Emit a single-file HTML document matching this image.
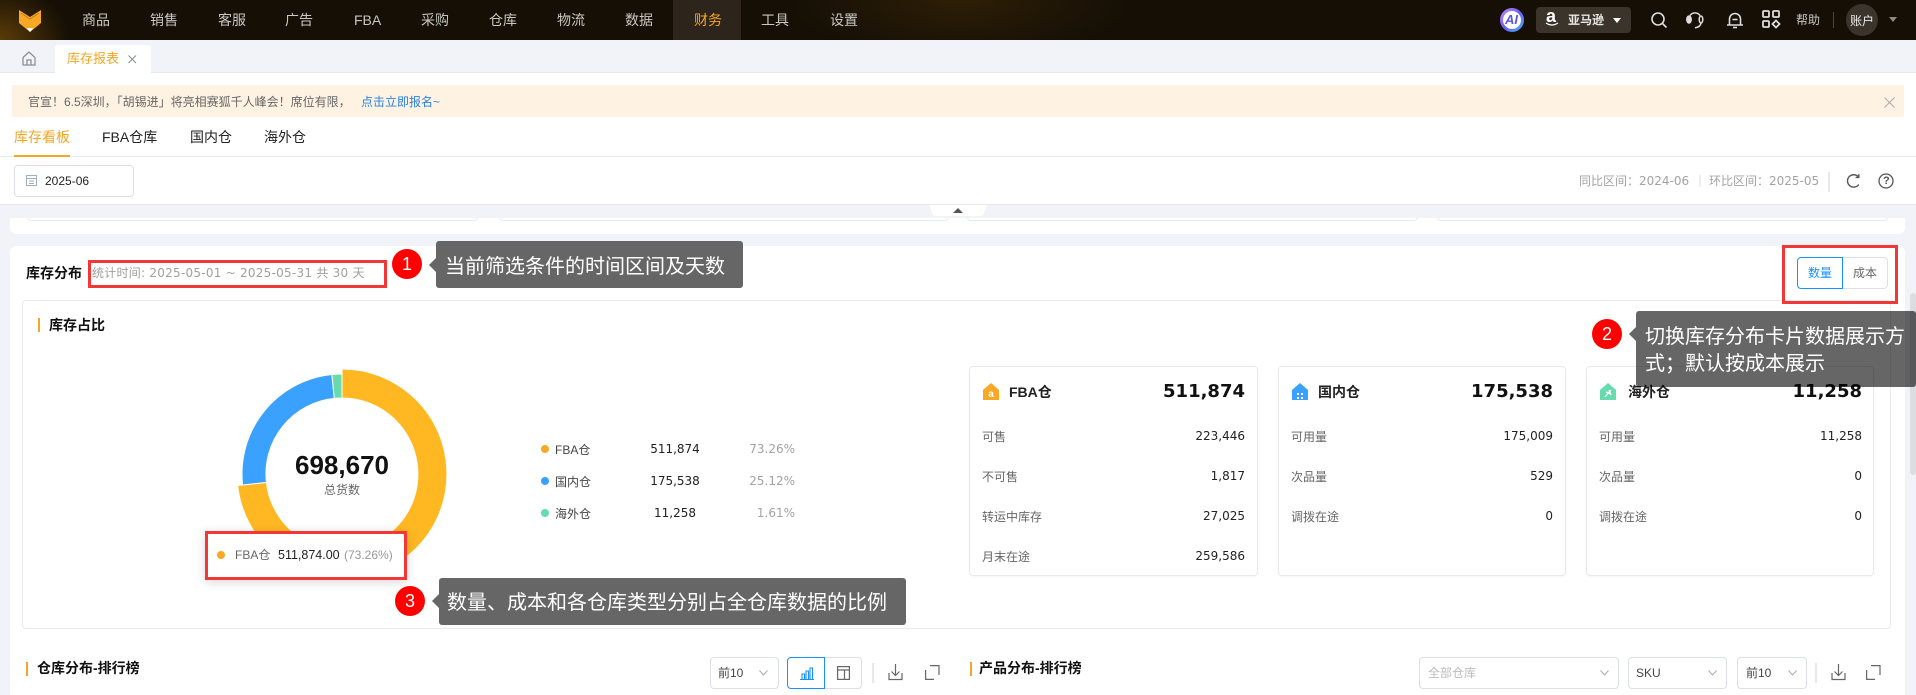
<!DOCTYPE html>
<html lang="zh"><head><meta charset="utf-8"><title>库存报表</title>
<style>
*{box-sizing:border-box;margin:0;padding:0}
html,body{width:1916px;height:695px;overflow:hidden;background:#f1f3f8}
body{position:relative;font-family:"Liberation Sans","Noto Sans CJK SC",sans-serif;font-size:12px;color:#222}
.a,.t{position:absolute}
.t{white-space:nowrap;line-height:18px}
.dj{font-family:"DejaVu Sans","Noto Sans CJK SC",sans-serif}
.hdr{left:0;top:0;width:1916px;height:40px;background:radial-gradient(ellipse 70px 55px at 0 40px,#5c3c08,transparent),radial-gradient(ellipse 170px 60px at 960px 0,#2e1f07,transparent),linear-gradient(#150f05,#150f05)}
.nav{color:#c9c7c3;font-size:14px;top:11px}
.lab{color:#666;font-size:12px}
.val{color:#222;font-size:12px;text-align:right;font-family:"DejaVu Sans",sans-serif}
.bt{font-weight:700;font-size:14px;color:#111}
.bar{background:#f5a623;width:2px;height:14px}
.box{border:1px solid #dcdfe6;border-radius:4px;background:#fff}
.red{border:3px solid #f33636;background:transparent}
.badge{width:30px;height:30px;border-radius:50%;background:#f00;color:#fff;font-size:18px;line-height:30px;text-align:center}
.tip{background:rgba(0,0,0,.6);border-radius:3px;color:#fff;font-size:20px}
.arr{width:0;height:0;border:7px solid transparent;border-right-color:#666;border-left:0}
.card{border:1px solid #e9eaee;border-radius:4px;background:#fff;box-shadow:0 1px 2px rgba(0,0,0,.04)}
.big{font-weight:700;font-size:18px;color:#111;text-align:right;line-height:26px;font-family:"DejaVu Sans",sans-serif}
.ct{font-weight:700;font-size:14px;color:#222}
.lv{font-size:12px;color:#222;text-align:center;font-family:"DejaVu Sans",sans-serif}
.lp{font-size:12px;color:#a3a3a3;text-align:right;font-family:"DejaVu Sans",sans-serif}
svg{position:absolute;overflow:visible}
</style></head><body>

<!-- header -->
<div class="a hdr"></div>
<svg style="left:0;top:0" width="60" height="40"><polygon points="19,10 30,17 41,10 41,23 30,32 19,23" fill="#f9a825"/><polygon points="26.500,28 33.500,28 30,32" fill="#fff"/><polyline points="21,13 30,19 39,13" fill="none" stroke="#c77f14" stroke-width="1"/></svg>
<div class="a" style="left:673px;top:0;width:68px;height:40px;background:#2d251c"></div>
<span class="t nav" style="left:82px">商品</span><span class="t nav" style="left:150px">销售</span><span class="t nav" style="left:218px">客服</span><span class="t nav" style="left:285px">广告</span><span class="t nav" style="left:354px">FBA</span><span class="t nav" style="left:421px">采购</span><span class="t nav" style="left:489px">仓库</span><span class="t nav" style="left:557px">物流</span><span class="t nav" style="left:625px">数据</span><span class="t nav" style="left:694px;color:#f5a623">财务</span><span class="t nav" style="left:761px">工具</span><span class="t nav" style="left:830px">设置</span>

<div class="a" style="left:1500px;top:8px;width:24px;height:24px;border-radius:50%;background:linear-gradient(135deg,#c58bf5,#6a5cf6 50%,#46b6f3);"></div>
<div class="a" style="left:1503px;top:11px;width:18px;height:18px;border-radius:50%;background:#fff"></div>
<span class="t" style="left:1505px;top:11px;font-size:13px;font-weight:700;font-style:italic;color:#5a55ea">AI</span>
<div class="a" style="left:1536px;top:7px;width:95px;height:26px;border-radius:4px;background:#3a342b"></div>
<span class="t" style="left:1546px;top:7px;font-size:18px;font-weight:700;color:#fff">a</span>
<svg style="left:1545px;top:22px" width="14" height="5"><path d="M1 1Q7 5 13 1" fill="none" stroke="#fff" stroke-width="1.200"/></svg>
<span class="t" style="left:1568px;top:11px;font-size:12px;font-weight:700;color:#e8e6e2">亚马逊</span>
<svg style="left:1612px;top:17px" width="10" height="7"><polygon points="1,1 9,1 5,6" fill="#fff"/></svg>
<svg style="left:1650px;top:11px" width="18" height="18" fill="none" stroke="#ddd" stroke-width="1.600"><circle cx="8" cy="8" r="6"/><path d="M12.500 12.500L16.500 16.500"/></svg>
<svg style="left:1686px;top:11px" width="18" height="18" fill="none" stroke="#ddd" stroke-width="1.500"><ellipse cx="3" cy="8.500" rx="2.200" ry="3.500" fill="#ddd"/><path d="M4 4.500A6 6 0 0 1 14 4.500"/><ellipse cx="15" cy="8.500" rx="1.800" ry="3.500"/><path d="M15 12Q14.500 16 9 16.800"/></svg>
<svg style="left:1726px;top:11px" width="18" height="18" fill="none" stroke="#ddd" stroke-width="1.600"><path d="M1 14h16M3.500 14V8a5.500 5.500 0 0 1 11 0v6"/><path d="M6.500 8.500h5"/><path d="M7 16.500h4"/></svg>
<svg style="left:1762px;top:10px" width="18" height="18" fill="none" stroke="#ddd" stroke-width="1.800"><rect x="1" y="1" width="6" height="6" rx="1"/><rect x="11" y="1" width="6" height="6" rx="1"/><rect x="1" y="11" width="6" height="6" rx="1"/><path d="M14 10.500l3.500 3.500-3.500 3.500-3.500-3.500z"/></svg>
<span class="t" style="left:1796px;top:11px;color:#c9c7c3;font-size:12px">帮助</span>
<div class="a" style="left:1833px;top:12px;width:1px;height:16px;background:#4a443a"></div>
<div class="a" style="left:1846px;top:4px;width:32px;height:32px;border-radius:50%;background:#3a342d"></div>
<span class="t" style="left:1850px;top:12px;color:#eceae6;font-size:12px">账户</span>
<svg style="left:1888px;top:16px" width="10" height="7"><polygon points="1,1 9,1 5,6" fill="#8d8a85"/></svg>

<!-- tabs -->
<div class="a" style="left:0;top:40px;width:1916px;height:33px;background:#f1f3f8;border-bottom:1px solid #e8e9ed"></div>
<svg style="left:22px;top:51px" width="14" height="15" fill="none" stroke="#8d8f94" stroke-width="1.300"><path d="M1 6.500L7 1l6 5.500V14H1zM5 14V9h4v5"/></svg>
<div class="a" style="left:55px;top:45px;width:96px;height:29px;background:#fff;border-radius:3px 3px 0 0"></div>
<span class="t" style="left:67px;top:50px;font-size:13px;color:#f5a623">库存报表</span>
<svg style="left:128px;top:55px" width="9" height="9" stroke="#8b8f96" stroke-width="1.100"><path d="M.5 .5L8 8M8 .5L.5 8"/></svg>

<!-- white filter area -->
<div class="a" style="left:0;top:73px;width:1916px;height:132px;background:#fff;border-bottom:1px solid #e8e9ed"></div>
<div class="a" style="left:12px;top:85px;width:1892px;height:32px;background:#fef3e2;border-radius:2px"></div>
<span class="t" style="left:28px;top:93px;color:#666">官宣！6.5深圳，「胡锡进」将亮相赛狐千人峰会！席位有限，</span>
<span class="t" style="left:361px;top:93px;color:#2a82e4">点击立即报名~</span>
<svg style="left:1884px;top:97px" width="11" height="11" stroke="#aaa" stroke-width="1"><path d="M.5 .5L10.500 10.500M10.500 .5L.5 10.500"/></svg>

<span class="t" style="left:14px;top:128px;font-size:14px;color:#f5a623">库存看板</span>
<span class="t" style="left:102px;top:128px;font-size:14px;color:#222">FBA仓库</span>
<span class="t" style="left:190px;top:128px;font-size:14px;color:#222">国内仓</span>
<span class="t" style="left:264px;top:128px;font-size:14px;color:#222">海外仓</span>
<div class="a" style="left:0;top:156px;width:1916px;height:1px;background:#e8e9ed"></div>
<div class="a" style="left:14px;top:155px;width:56px;height:2px;background:#f5a623"></div>

<div class="a box" style="left:14px;top:165px;width:120px;height:32px"></div>
<svg style="left:26px;top:175px" width="11" height="11" fill="none" stroke="#9fb0c4" stroke-width="1"><rect x=".5" y=".5" width="10" height="10"/><path d="M.5 3.500h10M3 6h5M3 8.500h5"/></svg>
<span class="t" style="left:45px;top:172px;color:#222">2025-06</span>

<span class="t dj" style="left:1579px;top:172px;color:#a3a3a3">同比区间：2024-06</span>
<div class="a" style="left:1699px;top:175px;width:2px;height:12px;background:#eee"></div>
<span class="t dj" style="left:1709px;top:172px;color:#a3a3a3">环比区间：2025-05</span>
<div class="a" style="left:1828px;top:172px;width:2px;height:20px;background:#e8e8e8"></div>
<svg style="left:1846px;top:174px" width="14" height="14" fill="none" stroke="#555" stroke-width="1.400"><path d="M12.500 3A6.200 6.200 0 1 0 12.800 10.500"/><path d="M12.800 .2V3.400H9.600"/></svg>
<svg style="left:1878px;top:173px" width="16" height="16" fill="none" stroke="#555" stroke-width="1.300"><circle cx="8" cy="8" r="7"/></svg>
<span class="t" style="left:1883px;top:172px;font-size:11px;font-weight:700;color:#555">?</span>

<!-- collapse handle -->
<svg style="left:928px;top:205px" width="60" height="12"><path d="M1 0H59L56 8Q55 11 52 11H8Q5 11 4 8z" fill="#fff"/><polygon points="30,3 35,8 25,8" fill="#555"/></svg>

<!-- strip card -->
<div class="a" style="left:10px;top:218px;width:1895px;height:16px;background:#fff;border-radius:0 0 6px 6px"></div>
<div class="a card" style="left:27px;top:210px;width:451px;height:11px;border-top:0;box-shadow:none;clip-path:inset(8px 0 0 0)"></div>
<div class="a card" style="left:499px;top:210px;width:450px;height:11px;border-top:0;box-shadow:none;clip-path:inset(8px 0 0 0)"></div>
<div class="a card" style="left:967px;top:210px;width:451px;height:11px;border-top:0;box-shadow:none;clip-path:inset(8px 0 0 0)"></div>
<div class="a card" style="left:1437px;top:210px;width:451px;height:11px;border-top:0;box-shadow:none;clip-path:inset(8px 0 0 0)"></div>

<!-- main card -->
<div class="a" style="left:10px;top:246px;width:1895px;height:449px;background:#fff;border-radius:6px 6px 0 0"></div>
<span class="t bt" style="left:26px;top:264px">库存分布</span>
<span class="t dj" style="left:92px;top:264px;color:#a0a0a0;letter-spacing:.25px">统计时间: 2025-05-01 ~ 2025-05-31 共 30 天</span>
<div class="a red" style="left:88px;top:260px;width:299px;height:28px"></div>

<div class="a card" style="left:22px;top:300px;width:1869px;height:329px;box-shadow:none"></div>
<div class="a bar" style="left:38px;top:318px"></div>
<span class="t bt" style="left:49px;top:316px">库存占比</span>

<!-- toggle -->
<div class="a box" style="left:1843px;top:257px;width:45px;height:32px;border-left:0;border-radius:0 4px 4px 0"></div>
<div class="a" style="left:1797px;top:257px;width:46px;height:32px;border:1px solid #1890ff;border-radius:4px 0 0 4px;background:#fff"></div>
<span class="t" style="left:1808px;top:264px;color:#1890ff">数量</span>
<span class="t" style="left:1853px;top:264px;color:#666">成本</span>

<!-- donut -->
<svg style="left:230px;top:362px" width="224" height="224" viewBox="-112 -112 224 224">
<path d="M0 -105A105 105 0 1 1 -104.400 11.500L-75.600 8.400A76 76 0 1 0 0 -76Z" fill="#ffb822" stroke="#fff" stroke-width="1"/>
<path d="M-99.400 11A100 100 0 0 1 -10.100 -99.500L-7.700 -75.600A76 76 0 0 0 -75.600 8.400Z" fill="#3aa1ff" stroke="#fff" stroke-width="1"/>
<path d="M-10.100 -99.500A100 100 0 0 1 0 -100L0 -76A76 76 0 0 0 -7.700 -75.600Z" fill="#67dbae" stroke="#fff" stroke-width="1"/>
</svg>
<div class="t" style="left:282px;top:449px;width:120px;text-align:center;font-size:26px;font-weight:700;color:#111;line-height:32px">698,670</div>
<div class="t" style="left:282px;top:481px;width:120px;text-align:center;font-size:12px;color:#666">总货数</div>

<!-- legend -->
<div class="a" style="left:541px;top:445px;width:8px;height:8px;border-radius:50%;background:#f9a825"></div>
<div class="a" style="left:541px;top:477px;width:8px;height:8px;border-radius:50%;background:#3aa1ff"></div>
<div class="a" style="left:541px;top:509px;width:8px;height:8px;border-radius:50%;background:#67dbae"></div>
<span class="t" style="left:555px;top:441px;color:#444">FBA仓</span>
<span class="t" style="left:555px;top:473px;color:#444">国内仓</span>
<span class="t" style="left:555px;top:505px;color:#444">海外仓</span>
<div class="t lv" style="left:625px;top:440px;width:100px">511,874</div>
<div class="t lv" style="left:625px;top:472px;width:100px">175,538</div>
<div class="t lv" style="left:625px;top:504px;width:100px">11,258</div>
<div class="t lp" style="left:695px;top:440px;width:100px">73.26%</div>
<div class="t lp" style="left:695px;top:472px;width:100px">25.12%</div>
<div class="t lp" style="left:695px;top:504px;width:100px">1.61%</div>

<!-- chart tooltip -->
<div class="a" style="left:205px;top:531px;width:202px;height:49px;background:#fff;box-shadow:0 2px 10px rgba(0,0,0,.16)"></div>
<div class="a" style="left:217px;top:551px;width:8px;height:8px;border-radius:50%;background:#f9a825"></div>
<span class="t" style="left:235px;top:546px;color:#666">FBA仓</span>
<span class="t" style="left:278px;top:546px;color:#222;font-size:12.500px">511,874.00</span>
<span class="t" style="left:344px;top:546px;color:#999">(73.26%)</span>
<div class="a red" style="left:205px;top:531px;width:202px;height:49px"></div>

<!-- stat cards -->
<div class="a card" style="left:969px;top:366px;width:289px;height:210px"></div>
<div class="a card" style="left:1278px;top:366px;width:288px;height:210px"></div>
<div class="a card" style="left:1586px;top:366px;width:288px;height:210px"></div>

<svg style="left:982px;top:383px" width="18" height="17"><path d="M9 0L17 7V17H1V7z" fill="#f9a825"/><text x="9" y="14" font-size="10" font-weight="700" fill="#fff" text-anchor="middle" font-family="Liberation Sans">a</text></svg>
<svg style="left:1291px;top:383px" width="18" height="17"><path d="M9 0L17 7V17H1V7z" fill="#3aa1ff"/><rect x="6" y="10" width="2" height="2" fill="#fff"/><rect x="10" y="10" width="2" height="2" fill="#fff"/><rect x="6" y="14" width="2" height="2" fill="#fff"/><rect x="10" y="14" width="2" height="2" fill="#fff"/></svg>
<svg style="left:1599px;top:383px" width="18" height="17"><path d="M9 0L17 7V17H1V7z" fill="#67dbae"/><path d="M12 7L6 14M7 9L12 11M10 7L12 12" stroke="#fff" stroke-width="1.300" fill="none"/></svg>
<span class="t ct" style="left:1009px;top:383px">FBA仓</span>
<span class="t ct" style="left:1318px;top:383px">国内仓</span>
<span class="t ct" style="left:1628px;top:383px">海外仓</span>
<div class="t big" style="left:1095px;top:379px;width:150px">511,874</div>
<div class="t big" style="left:1403px;top:379px;width:150px">175,538</div>
<div class="t big" style="left:1712px;top:379px;width:150px">11,258</div>

<span class="t lab" style="left:982px;top:428px">可售</span><div class="t val" style="left:1145px;top:427px;width:100px">223,446</div>
<span class="t lab" style="left:982px;top:468px">不可售</span><div class="t val" style="left:1145px;top:467px;width:100px">1,817</div>
<span class="t lab" style="left:982px;top:508px">转运中库存</span><div class="t val" style="left:1145px;top:507px;width:100px">27,025</div>
<span class="t lab" style="left:982px;top:548px">月末在途</span><div class="t val" style="left:1145px;top:547px;width:100px">259,586</div>

<span class="t lab" style="left:1291px;top:428px">可用量</span><div class="t val" style="left:1453px;top:427px;width:100px">175,009</div>
<span class="t lab" style="left:1291px;top:468px">次品量</span><div class="t val" style="left:1453px;top:467px;width:100px">529</div>
<span class="t lab" style="left:1291px;top:508px">调拨在途</span><div class="t val" style="left:1453px;top:507px;width:100px">0</div>

<span class="t lab" style="left:1599px;top:428px">可用量</span><div class="t val" style="left:1762px;top:427px;width:100px">11,258</div>
<span class="t lab" style="left:1599px;top:468px">次品量</span><div class="t val" style="left:1762px;top:467px;width:100px">0</div>
<span class="t lab" style="left:1599px;top:508px">调拨在途</span><div class="t val" style="left:1762px;top:507px;width:100px">0</div>

<!-- bottom toolbars -->
<div class="a bar" style="left:26px;top:662px"></div>
<span class="t bt" style="left:37px;top:659px">仓库分布-排行榜</span>
<div class="a box" style="left:710px;top:657px;width:69px;height:32px"></div>
<span class="t" style="left:718px;top:664px;color:#444">前10</span>
<svg style="left:759px;top:670px" width="9" height="6" fill="none" stroke="#aaa"><path d="M.5 .5L4.500 5 8.500 .5"/></svg>
<div class="a box" style="left:824px;top:657px;width:38px;height:32px;border-left:0;border-radius:0 4px 4px 0"></div>
<div class="a" style="left:787px;top:657px;width:38px;height:32px;border:1px solid #1890ff;border-radius:4px 0 0 4px;background:#fff"></div>
<svg style="left:800px;top:666px" width="14" height="14" fill="none" stroke="#1890ff" stroke-width="1.100"><path d="M0 13.500h14M2 13V8h2.500v5M6 13V5h2.500v8M10 13V2h2.500v11"/></svg>
<svg style="left:837px;top:666px" width="13" height="14" fill="none" stroke="#666" stroke-width="1.200"><rect x=".6" y=".6" width="11.800" height="12.800"/><path d="M.6 4h11.800M7.500 4v9.400"/></svg>
<div class="a" style="left:872px;top:663px;width:2px;height:20px;background:#e8e8e8"></div>
<svg style="left:888px;top:664px" width="15" height="17" fill="none" stroke="#666" stroke-width="1.200"><path d="M7.500 0V11M3.500 7.500L7.500 11.500 11.500 7.500M1 9V15.500H14V9"/></svg>
<svg style="left:925px;top:665px" width="15" height="15" fill="none" stroke="#666" stroke-width="1.200"><path d="M5 .6H14V10"/><path d="M.6 5V14.400H9"/></svg>

<div class="a bar" style="left:970px;top:662px"></div>
<span class="t bt" style="left:979px;top:659px">产品分布-排行榜</span>
<div class="a box" style="left:1419px;top:657px;width:200px;height:32px"></div>
<span class="t" style="left:1428px;top:664px;color:#bbb">全部仓库</span>
<svg style="left:1600px;top:670px" width="9" height="6" fill="none" stroke="#aaa"><path d="M.5 .5L4.500 5 8.500 .5"/></svg>
<div class="a box" style="left:1628px;top:657px;width:99px;height:32px"></div>
<span class="t" style="left:1636px;top:664px;color:#444">SKU</span>
<svg style="left:1708px;top:670px" width="9" height="6" fill="none" stroke="#aaa"><path d="M.5 .5L4.500 5 8.500 .5"/></svg>
<div class="a box" style="left:1737px;top:657px;width:70px;height:32px"></div>
<span class="t" style="left:1746px;top:664px;color:#444">前10</span>
<svg style="left:1788px;top:670px" width="9" height="6" fill="none" stroke="#aaa"><path d="M.5 .5L4.500 5 8.500 .5"/></svg>
<div class="a" style="left:1815px;top:663px;width:2px;height:20px;background:#e8e8e8"></div>
<svg style="left:1831px;top:664px" width="15" height="17" fill="none" stroke="#666" stroke-width="1.200"><path d="M7.500 0V11M3.500 7.500L7.500 11.500 11.500 7.500M1 9V15.500H14V9"/></svg>
<svg style="left:1866px;top:665px" width="15" height="15" fill="none" stroke="#666" stroke-width="1.200"><path d="M5 .6H14V10"/><path d="M.6 5V14.400H9"/></svg>

<!-- scrollbar -->
<div class="a" style="left:1910px;top:293px;width:6px;height:182px;background:#dcdde0;border-radius:3px"></div>

<!-- annotations -->
<div class="a badge" style="left:392px;top:249px">1</div>
<div class="a arr" style="left:429px;top:258px"></div>
<div class="a tip" style="left:436px;top:241px;width:307px;height:47px;background:#666"></div>
<span class="t" style="left:445px;top:254px;color:#fff;font-size:20px;line-height:26px">当前筛选条件的时间区间及天数</span>

<div class="a red" style="left:1782px;top:245px;width:116px;height:59px"></div>

<div class="a badge" style="left:1592px;top:319px">2</div>
<div class="a arr" style="left:1629px;top:327px"></div>
<div class="a tip" style="left:1636px;top:311px;width:280px;height:76px"></div>
<span class="t" style="left:1645px;top:323px;color:#fff;font-size:20px;line-height:28px">切换库存分布卡片数据展示方</span>
<span class="t" style="left:1645px;top:350px;color:#fff;font-size:20px;line-height:28px">式；默认按成本展示</span>

<div class="a badge" style="left:395px;top:586px">3</div>
<div class="a arr" style="left:432px;top:594px"></div>
<div class="a tip" style="left:439px;top:578px;width:467px;height:47px;background:#666"></div>
<span class="t" style="left:447px;top:590px;color:#fff;font-size:20px;line-height:26px">数量、成本和各仓库类型分别占全仓库数据的比例</span>

</body></html>
